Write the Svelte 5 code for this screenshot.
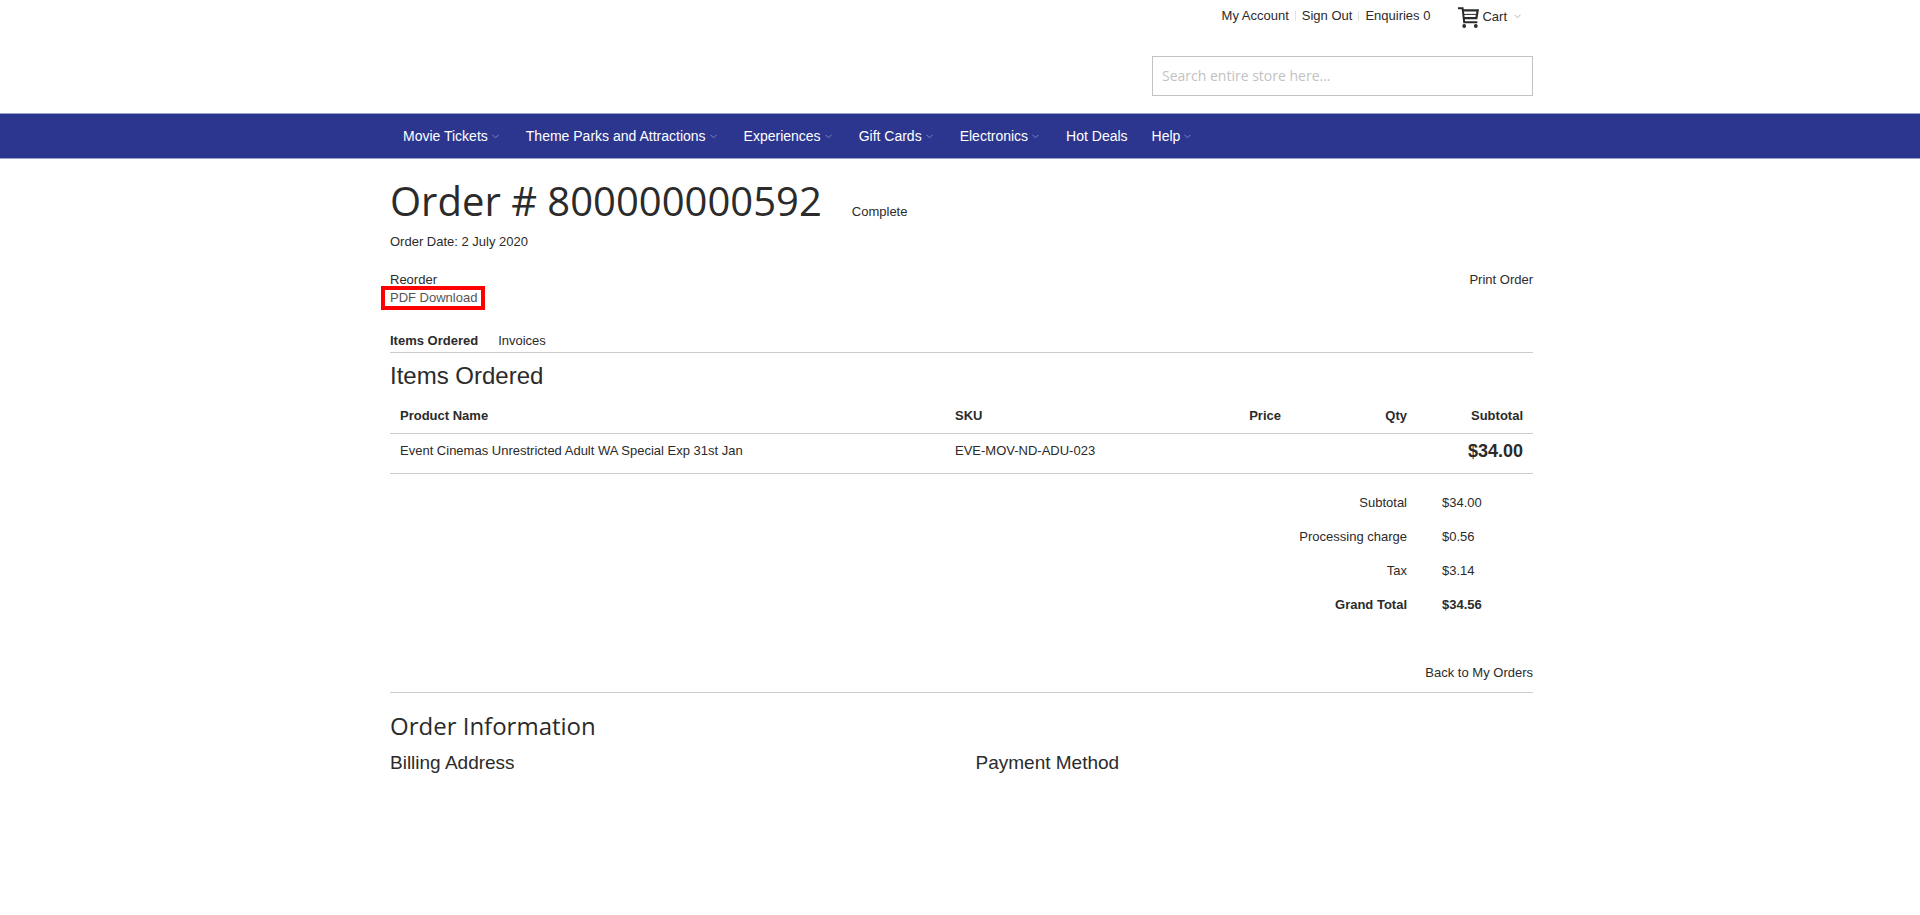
<script>
  const navItems = [
    { label: 'Movie Tickets', children: true },
    { label: 'Theme Parks and Attractions', children: true },
    { label: 'Experiences', children: true },
    { label: 'Gift Cards', children: true },
    { label: 'Electronics', children: true },
    { label: 'Hot Deals', children: false },
    { label: 'Help', children: true }
  ];

  const order = {
    number: '800000000592',
    status: 'Complete',
    date: '2 July 2020',
    items: [
      {
        name: 'Event Cinemas Unrestricted Adult WA Special Exp 31st Jan',
        sku: 'EVE-MOV-ND-ADU-023',
        subtotal: '$34.00'
      }
    ],
    totals: [
      { label: 'Subtotal', value: '$34.00' },
      { label: 'Processing charge', value: '$0.56' },
      { label: 'Tax', value: '$3.14' },
      { label: 'Grand Total', value: '$34.56', grand: true }
    ]
  };

  let search = $state('');
</script>

{#snippet chevron()}
  <svg class="chevron" viewBox="0 0 7 5" aria-hidden="true">
    <path d="M0.5 0.8 L3.5 3.8 L6.5 0.8" fill="none" stroke="currentColor" />
  </svg>
{/snippet}

<header class="container header">
  <div class="top-links">
    <ul>
      <li><a href="/customer/account">My Account</a></li>
      <li><a href="/customer/logout">Sign Out</a></li>
      <li><a href="/enquiries">Enquiries 0</a></li>
    </ul>
    <button class="cart" type="button">
      <svg class="cart-icon" viewBox="0 0 21 21" aria-hidden="true">
        <path d="M0 1.2H4.6L6.2 15.2H19.4" fill="none" stroke="currentColor" stroke-width="2" />
        <path d="M4.8 3.4H19.7L18.4 11.2H5.8" fill="none" stroke="currentColor" stroke-width="2.2" />
        <path d="M5.5 7.4H18.5" fill="none" stroke="currentColor" stroke-width="1" />
        <circle cx="6.2" cy="19" r="1.9" fill="currentColor" />
        <circle cx="17.8" cy="19" r="1.9" fill="currentColor" />
      </svg>
      <span>Cart</span>
      {@render chevron()}
    </button>
  </div>
  <form class="search" role="search">
    <input type="text" bind:value={search} placeholder="Search entire store here..." aria-label="Search" />
  </form>
</header>

<nav class="nav">
  <ul class="container">
    {#each navItems as item}
      <li>
        <a href="/{item.label.toLowerCase().replaceAll(' ', '-')}">
          {item.label}
          {#if item.children}{@render chevron()}{/if}
        </a>
      </li>
    {/each}
  </ul>
</nav>

<main class="container">
  <div class="title">
    <h1>Order # {order.number}</h1>
    <span>{order.status}</span>
  </div>
  <p class="date">Order Date: {order.date}</p>

  <div class="actions">
    <div class="actions-left">
      <a href="/reorder">Reorder</a>
      <a class="pdf" href="/pdf">PDF Download</a>
    </div>
    <a href="/print">Print Order</a>
  </div>

  <ul class="tabs">
    <li class="current">Items Ordered</li>
    <li><a href="/invoices">Invoices</a></li>
  </ul>

  <h2 class="items-title">Items Ordered</h2>
  <table>
    <thead>
      <tr>
        <th class="name">Product Name</th>
        <th class="sku">SKU</th>
        <th class="num">Price</th>
        <th class="num qty">Qty</th>
        <th class="num subtotal">Subtotal</th>
      </tr>
    </thead>
    <tbody>
      {#each order.items as item}
        <tr>
          <td>{item.name}</td>
          <td>{item.sku}</td>
          <td></td>
          <td></td>
          <td class="num price">{item.subtotal}</td>
        </tr>
      {/each}
    </tbody>
    <tfoot>
      {#each order.totals as total}
        <tr class:grand={total.grand}>
          <th colspan="4" scope="row">{total.label}</th>
          <td>{total.value}</td>
        </tr>
      {/each}
    </tfoot>
  </table>

  <div class="back">
    <a href="/orders">Back to My Orders</a>
  </div>

  <h2 class="info-title">Order Information</h2>
  <div class="info">
    <h3>Billing Address</h3>
    <h3>Payment Method</h3>
  </div>
</main>

<style>
  :global(body) {
    margin: 0;
    background: #fff;
    color: #2b2b2b;
    font-family: 'Liberation Sans', Arial, sans-serif;
    font-size: 13px;
    line-height: 18px;
  }

  a {
    color: inherit;
    text-decoration: none;
  }

  ul {
    list-style: none;
    margin: 0;
    padding: 0;
  }

  h1,
  h2,
  h3,
  p {
    margin: 0;
    font-weight: 400;
  }

  .container {
    box-sizing: border-box;
    max-width: 1146px;
    margin: 0 auto;
    padding-left: 3px;
  }

  .chevron {
    width: 7px;
    height: 5px;
    flex: none;
  }

  .header {
    display: flex;
    flex-direction: column;
    align-items: flex-end;
    gap: 28px;
    padding-top: 7px;
    padding-bottom: 17px;
  }

  .top-links {
    display: flex;
    align-items: flex-start;
    gap: 28px;
    padding-right: 12px;
  }

  .top-links ul {
    display: flex;
    align-items: center;
  }

  .top-links li + li {
    margin-left: 6px;
    padding-left: 7px;
    /* short divider between the links */
    background: linear-gradient(#e2e2e2, #e2e2e2) left center / 1px 10px no-repeat;
  }

  .cart {
    display: flex;
    align-items: center;
    padding: 0;
    border: 0;
    background: none;
    color: #2b2b2b;
    font: inherit;
    line-height: 18px;
    cursor: pointer;
  }

  .cart span {
    margin: 0 7px 2px 3px;
  }

  .cart .chevron {
    margin-bottom: 2px;
    color: #b5b5b5;
  }

  .cart-icon {
    width: 21px;
    height: 21px;
  }

  .search {
    width: 381px;
    max-width: 100%;
  }

  .search input {
    box-sizing: border-box;
    display: block;
    width: 100%;
    height: 40px;
    padding: 0 9px 2px;
    border: 1px solid #c2c2c2;
    font-family: 'Open Sans', sans-serif;
    font-size: 14px;
    color: #2b2b2b;
  }

  .search input::placeholder {
    color: #c2c2c2;
    opacity: 1;
  }

  .nav {
    border-top: 1px solid #9a9ec8;
    border-bottom: 1px solid #9a9ec8;
    background: #2c368f;
    color: #fff;
    font-size: 14px;
  }

  .nav ul {
    display: flex;
    flex-wrap: wrap;
    gap: 0 24px;
    padding-left: 16px;
  }

  .nav a {
    display: flex;
    align-items: center;
    height: 44px;
  }

  .nav .chevron {
    margin: 0 3px 0 4px;
    color: #7f86bf;
  }

  .title {
    display: flex;
    align-items: baseline;
    gap: 30px;
    padding-top: 15px;
  }

  h1 {
    font-family: 'Open Sans', sans-serif;
    font-size: 40px;
    line-height: 54px;
  }

  .date {
    margin-top: 5px;
  }

  .actions {
    display: flex;
    justify-content: space-between;
    margin-top: 20px;
  }

  .actions-left {
    display: flex;
    flex-direction: column;
    align-items: flex-start;
  }

  .pdf {
    position: relative;
    color: #555;
  }

  /* highlight frame round the download link */
  .pdf::after {
    content: '';
    position: absolute;
    inset: -3px -8px -3px -9px;
    border: 4px solid #f00;
  }

  .tabs {
    display: flex;
    gap: 20px;
    margin-top: 25px;
    padding-bottom: 2px;
    border-bottom: 1px solid #ccc;
  }

  .current {
    font-weight: 700;
  }

  .items-title {
    padding: 8px 0;
    font-size: 24px;
    line-height: 30px;
  }

  table {
    width: 100%;
    border-collapse: collapse;
    table-layout: fixed;
  }

  th,
  td {
    padding: 8px 10px;
    text-align: left;
    vertical-align: top;
  }

  thead th {
    border-bottom: 1px solid #ccc;
  }

  .name {
    width: 535px;
  }

  .sku {
    width: 206px;
  }

  .qty {
    width: 106px;
  }

  .subtotal {
    width: 96px;
  }

  .num {
    text-align: right;
  }

  tbody td {
    padding-bottom: 13px;
    border-bottom: 1px solid #ccc;
  }

  .price {
    font-size: 18px;
    font-weight: 700;
  }

  tfoot th {
    font-weight: 400;
    text-align: right;
  }

  tfoot td {
    padding-left: 25px;
  }

  tfoot tr:first-child > * {
    padding-top: 20px;
  }

  tfoot .grand > * {
    font-weight: 700;
  }

  .back {
    padding: 42px 0 10px;
    border-bottom: 1px solid #ccc;
    text-align: right;
  }

  .info-title {
    padding-top: 16px;
    font-family: 'Open Sans', sans-serif;
    font-size: 24px;
    line-height: 34px;
  }

  .info {
    display: grid;
    grid-template-columns: 1fr 1fr;
    gap: 28px;
    margin-top: 8px;
  }

  h3 {
    font-size: 19px;
    line-height: 24px;
  }
</style>
